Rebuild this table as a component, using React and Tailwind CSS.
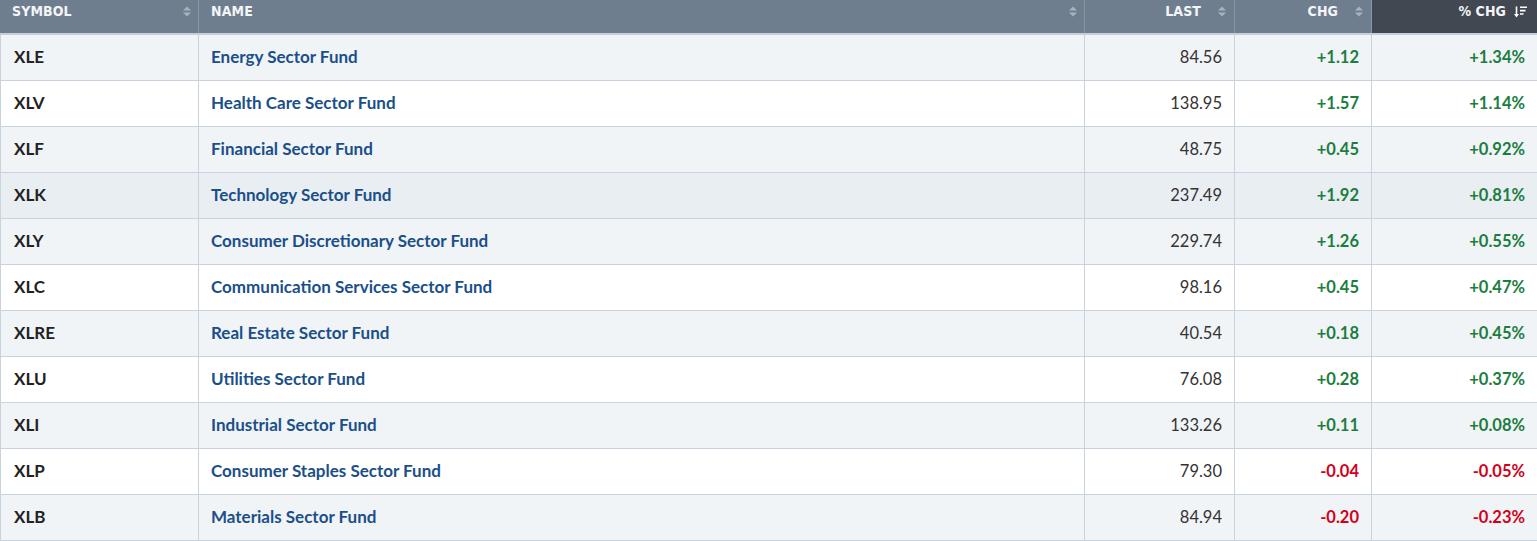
const ROWS = [
  { sym: 'XLE', name: 'Energy Sector Fund', last: '84.56', chg: '+1.12', pct: '+1.34%' },
  { sym: 'XLV', name: 'Health Care Sector Fund', last: '138.95', chg: '+1.57', pct: '+1.14%' },
  { sym: 'XLF', name: 'Financial Sector Fund', last: '48.75', chg: '+0.45', pct: '+0.92%' },
  { sym: 'XLK', name: 'Technology Sector Fund', last: '237.49', chg: '+1.92', pct: '+0.81%', hover: true },
  { sym: 'XLY', name: 'Consumer Discretionary Sector Fund', last: '229.74', chg: '+1.26', pct: '+0.55%' },
  { sym: 'XLC', name: 'Communication Services Sector Fund', last: '98.16', chg: '+0.45', pct: '+0.47%' },
  { sym: 'XLRE', name: 'Real Estate Sector Fund', last: '40.54', chg: '+0.18', pct: '+0.45%' },
  { sym: 'XLU', name: 'Utilities Sector Fund', last: '76.08', chg: '+0.28', pct: '+0.37%' },
  { sym: 'XLI', name: 'Industrial Sector Fund', last: '133.26', chg: '+0.11', pct: '+0.08%' },
  { sym: 'XLP', name: 'Consumer Staples Sector Fund', last: '79.30', chg: '-0.04', pct: '-0.05%' },
  { sym: 'XLB', name: 'Materials Sector Fund', last: '84.94', chg: '-0.20', pct: '-0.23%' },
]

const GRID = 'grid grid-cols-[199px_886px_150px_137px_1fr]'

function SortIcon() {
  return (
    <svg width="10" height="11" viewBox="0 0 10 11" className="shrink-0">
      <path d="M5 0.5 L9 4.5 L1 4.5 Z" fill="#a7b2be" />
      <path d="M5 10.5 L9 6.5 L1 6.5 Z" fill="#a7b2be" />
    </svg>
  )
}

function SortDescIcon() {
  return (
    <svg width="13" height="12" viewBox="0 0 13 12" className="shrink-0">
      <path d="M2.5 0.5 V10" stroke="#fff" strokeWidth="1.6" />
      <path d="M0 8 L2.5 11.5 L5 8 Z" fill="#fff" />
      <path d="M6 1.2 H13 M6 4.6 H11.5 M6 8 H9.5" stroke="#fff" strokeWidth="1.6" />
    </svg>
  )
}

function HeadCell({ label, right, active, last }) {
  let pad = 'justify-between pl-[12px] pr-[6px]'
  if (right) pad = active ? 'justify-end pr-[10px] gap-[8px]' : 'justify-end pr-[7px] gap-[16px]'
  return (
    <div
      className={`flex items-start h-[33px] pt-[3px] ${pad} ${active ? 'bg-[#414852]' : ''} ${last ? '' : 'border-r border-[#8796a5]'}`}
    >
      <span className="leading-[17px] text-[14px] font-bold text-[#f3f5f7] tracking-[0.1px]">{label}</span>
      <span className="h-[17px] flex items-center">
        {active ? <SortDescIcon /> : <SortIcon />}
      </span>
    </div>
  )
}

export default function App() {
  return (
    <div className="w-[1537px] h-[541px] bg-white overflow-hidden font-['Lato',sans-serif]">
      <div
        className={`${GRID} bg-[#6f7e8f] border-b-2 border-[#c3cfdb]`}
        style={{ fontFamily: '"DejaVu Sans Condensed", "DejaVu Sans", sans-serif' }}
      >
        <HeadCell label="SYMBOL" />
        <HeadCell label="NAME" />
        <HeadCell label="LAST" right />
        <HeadCell label="CHG" right />
        <HeadCell label="% CHG" right active last />
      </div>

      {ROWS.map((r, i) => {
        const bg = r.hover ? 'bg-[#e9eef3]' : i % 2 === 0 ? 'bg-[#f1f4f7]' : 'bg-white'
        const color = r.chg.startsWith('-') ? 'text-[#d0021b]' : 'text-[#1b7d40]'
        return (
          <div key={r.sym} className={`${GRID} h-[46px] border-b border-[#c8d3dd] ${bg} text-[16.5px] leading-[20px]`}>
            <div className="flex items-center pl-[13px] pb-[1px] border-l border-r border-[#c8d3dd] text-[17px] font-bold text-[#222]">
              {r.sym}
            </div>
            <div className="flex items-center pl-[12px] pb-[1px] border-r border-[#c8d3dd] text-[17px] font-bold text-[#1a4f8a]">
              {r.name}
            </div>
            <div className="flex items-center justify-end pr-[12px] pb-[1px] border-r border-[#c8d3dd] text-[#333]">
              {r.last}
            </div>
            <div className={`flex items-center justify-end pr-[12px] pb-[1px] border-r border-[#c8d3dd] font-bold ${color}`}>
              {r.chg}
            </div>
            <div className={`flex items-center justify-end pr-[12px] pb-[1px] font-bold ${color}`}>
              {r.pct}
            </div>
          </div>
        )
      })}
    </div>
  )
}
